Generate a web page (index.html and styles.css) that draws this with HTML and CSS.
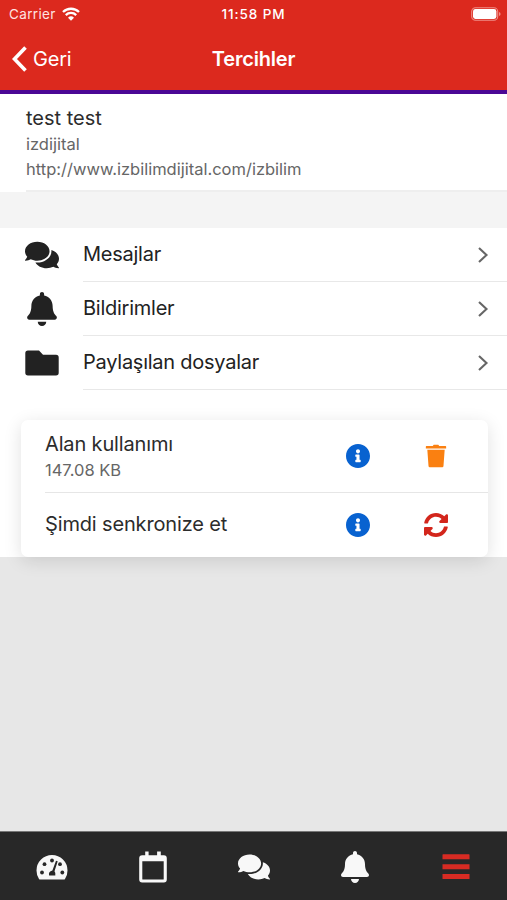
FILE: index.html
```html
<!doctype html>
<html lang="tr">
<head>
    <meta charset="UTF-8">
    <meta name="viewport" content="width=device-width, initial-scale=1.0">
    <title>Tercihler</title>

    <link rel="stylesheet" href="styles.css">
</head>
<body>
    <!-- Shared icons -->
    <svg class="sprite" aria-hidden="true">
        <symbol id="comments" viewBox="0 0 576 512">
            <path d="M416 192c0-88.4-93.1-160-208-160S0 103.6 0 192c0 34.3 14.1 65.9 38 92-13.4 30.2-35.5 54.2-35.8 54.5-2.2 2.3-2.8 5.7-1.5 8.7S4.8 352 8 352c36.6 0 66.9-12.3 88.7-25 32.2 15.7 70.3 25 111.3 25 114.9 0 208-71.6 208-160zm122 220c23.9-26 38-57.7 38-92 0-66.9-53.5-124.2-129.3-148.1.9 6.6 1.3 13.3 1.3 20.1 0 105.9-107.7 192-240 192-10.8 0-21.3-.8-31.7-1.9C207.8 439.6 281.8 480 368 480c41 0 79.1-9.2 111.3-25 21.8 12.7 52.1 25 88.7 25 3.2 0 6.1-1.9 7.3-4.8 1.3-2.9.7-6.3-1.5-8.7-.3-.3-22.4-24.2-35.8-54.5z"/>
        </symbol>
        <symbol id="bell" viewBox="0 0 448 512">
            <path d="M224 512c35.32 0 63.97-28.65 63.97-64H160.03c0 35.35 28.65 64 63.97 64zm215.39-149.71c-19.32-20.76-55.47-51.99-55.47-154.29 0-77.7-54.48-139.9-127.94-155.16V32c0-17.67-14.32-32-31.98-32s-31.98 14.33-31.98 32v20.84C118.56 68.1 64.08 130.3 64.08 208c0 102.3-36.15 133.53-55.47 154.29-6 6.45-8.66 14.16-8.61 21.71.11 16.4 12.98 32 32.1 32h383.8c19.12 0 32-15.6 32.1-32 .05-7.55-2.61-15.27-8.61-21.71z"/>
        </symbol>
        <symbol id="info" viewBox="8 8 496 496">
            <path d="M256 8C119.043 8 8 119.083 8 256c0 136.997 111.043 248 248 248s248-111.003 248-248C504 119.083 392.957 8 256 8zm0 110c23.196 0 42 18.804 42 42s-18.804 42-42 42-42-18.804-42-42 18.804-42 42-42zm56 254c0 6.627-5.373 12-12 12h-88c-6.627 0-12-5.373-12-12v-24c0-6.627 5.373-12 12-12h12v-64h-12c-6.627 0-12-5.373-12-12v-24c0-6.627 5.373-12 12-12h64c6.627 0 12 5.373 12 12v100h12c6.627 0 12 5.373 12 12v24z"/>
        </symbol>
        <symbol id="chevron" viewBox="0 0 12 18">
            <path d="M2 2l7.5 7L2 16" fill="none" stroke="currentColor" stroke-width="2.1"/>
        </symbol>
    </svg>

    <header>
        <div class="status">
            <div class="carrier">
                Carrier
                <svg class="wifi" viewBox="0 0 18 14">
                    <path d="M1 5a11.5 11.5 0 0 1 16 0M3.8 8.1a7.4 7.4 0 0 1 10.4 0" fill="none" stroke="#fff" stroke-width="2.3"/>
                    <path d="M9 13.8L6 10.8a4.3 4.3 0 0 1 6 0z" fill="#fff"/>
                </svg>
            </div>
            <div class="time">11:58 PM</div>
            <svg class="battery" viewBox="0 0 30 14">
                <rect x=".7" y=".7" width="26" height="12.6" rx="3.8" fill="none" stroke="#ee8f88" stroke-width="1.1"/>
                <rect x="2" y="2" width="23.4" height="10" rx="2.4" fill="#fff"/>
                <path d="M28 5v4q1.6-.6 1.6-2T28 5z" fill="#ee8f88"/>
            </svg>
        </div>
        <nav>
            <a class="back" href="#">
                <svg viewBox="0 0 16 26"><path d="M14.500 1.500L3.500 13l11 11.500" fill="none" stroke="#fff" stroke-width="3.6"/></svg>
                Geri
            </a>
            <h1>Tercihler</h1>
        </nav>
    </header>

    <main>
        <section class="profile">
            <h2>test test</h2>
            <p>izdijital</p>
            <p>http://www.izbilimdijital.com/izbilim</p>
        </section>

        <ul class="menu">
            <li>
                <svg class="menu-icon"><use href="#comments"/></svg>
                <a href="#">Mesajlar <svg><use href="#chevron"/></svg></a>
            </li>
            <li>
                <svg class="menu-icon"><use href="#bell"/></svg>
                <a href="#">Bildirimler <svg><use href="#chevron"/></svg></a>
            </li>
            <li>
                <svg class="menu-icon" viewBox="0 0 34 34"><path d="M3 4.5h11l4 4.3h13a2.7 2.7 0 0 1 2.7 2.7v15.3a2.7 2.7 0 0 1-2.7 2.7H3a2.7 2.7 0 0 1-2.7-2.7V7.2A2.7 2.7 0 0 1 3 4.5z"/></svg>
                <a href="#">Paylaşılan dosyalar <svg><use href="#chevron"/></svg></a>
            </li>
        </ul>

        <section class="card">
            <div class="card-row usage">
                <div class="card-text">
                    <h3>Alan kullanımı</h3>
                    <p>147.08 KB</p>
                </div>
                <svg class="icon-info"><use href="#info"/></svg>
                <svg class="icon-action icon-trash" viewBox="0 0 24 26">
                    <path d="M1.500 2.200h7L9.500.8h5l1 1.400h7q.5 0 .5.500v2.300H1V2.700q0-.5.500-.5zM2.600 6.300h18.800l-1.300 17.500q-.1 1.300-1.300 1.300H5.200q-1.200 0-1.300-1.300z"/>
                </svg>
            </div>
            <div class="card-row sync">
                <div class="card-text">
                    <h3>Şimdi senkronize et</h3>
                </div>
                <svg class="icon-info"><use href="#info"/></svg>
                <svg class="icon-action icon-sync" viewBox="8 8 496 496">
                    <path d="M370.72 133.28C339.458 104.008 298.888 87.962 255.848 88c-77.458.068-144.328 53.178-162.791 126.85-1.344 5.363-6.122 9.15-11.651 9.15H24.103c-7.498 0-13.194-6.807-11.807-14.176C33.933 94.924 134.813 8 256 8c66.448 0 126.791 26.136 171.315 68.685L463.03 40.97C478.149 25.851 504 36.559 504 57.941V192c0 13.255-10.745 24-24 24H345.941c-21.382 0-32.09-25.851-16.971-40.971l41.75-41.749zM32 296h134.059c21.382 0 32.09 25.851 16.971 40.971l-41.75 41.75c31.262 29.273 71.835 45.319 114.876 45.28 77.418-.07 144.315-53.144 162.787-126.849 1.344-5.363 6.122-9.15 11.651-9.15h57.304c7.498 0 13.194 6.807 11.807 14.176C478.067 417.076 377.187 504 256 504c-66.448 0-126.791-26.136-171.315-68.685L48.97 471.03C33.851 486.149 8 475.441 8 454.059V320c0-13.255 10.745-24 24-24z"/>
                </svg>
            </div>
        </section>
    </main>

    <footer>
        <a href="#">
            <svg viewBox="0 0 32 32">
                <path d="M3 28Q.5 24.500.5 19.500a15.500 15.500 0 0 1 31 0q0 5-2.500 8.500-.4.500-1.200.500H4.200q-.8 0-1.200-.5z"/>
                <g fill="#282828">
                    <circle cx="6" cy="21.500" r="1.900"/>
                    <circle cx="8.500" cy="13.200" r="1.900"/>
                    <circle cx="16" cy="9.500" r="1.900"/>
                    <circle cx="24" cy="13.200" r="1.900"/>
                    <circle cx="26.300" cy="21.500" r="1.900"/>
                    <path d="M20 9.800l1.700.5-3.200 10q1.600 2.200.8 4.200h-6.200q-1-3.800 3.300-4.900z"/>
                </g>
            </svg>
        </a>
        <a href="#">
            <svg viewBox="0 0 32 32">
                <path fill-rule="evenodd" d="M8.200.5h3.400v3.700h8.500V.5h3.700v3.700h3a3 3 0 0 1 3 3v21.300a3 3 0 0 1-3 3H5.200a3 3 0 0 1-3-3V7.200a3 3 0 0 1 3-3h3zM5.300 10.300v17.700q0 .5.500.5h20.400q.5 0 .5-.5V10.300z"/>
            </svg>
        </a>
        <a href="#"><svg><use href="#comments"/></svg></a>
        <a href="#"><svg><use href="#bell"/></svg></a>
        <a class="active" href="#">
            <svg viewBox="0 0 32 32"><path d="M3 3.300h26q.5 0 .5.500v4.500H2.500V3.800q0-.5.500-.5zM2.500 13.200h27v5h-27zM2.500 23h27v4.500q0 .5-.5.500H3q-.5 0-.5-.5z"/></svg>
        </a>
    </footer>
</body>
</html>
```

FILE: styles.css
```css
* {
    box-sizing: border-box;
}

body {
    font-family: 'Inter', sans-serif;
    margin: 0;
    height: 900px;
    display: flex;
    flex-direction: column;
    overflow: hidden;
    background-color: #e7e7e7;
    color: #2c2c2c;
}

h1, h2, h3, p, ul {
    margin: 0;
    padding: 0;
    font-weight: 400;
}

a {
    color: inherit;
    text-decoration: none;
}

svg {
    display: block;
    flex-shrink: 0;
    fill: currentColor;
}

.sprite {
    display: none;
}

header {
    height: 94px;
    background-color: #dc291e;
    border-bottom: 4px solid #4b0795;
    color: #fff;
}

.status, nav {
    display: grid;
    grid-template-columns: 1fr auto 1fr;
    align-items: center;
}

.status {
    height: 27px;
    padding: 0 6px 0 9px;
    font-size: 13.5px;
}

.carrier {
    display: flex;
    align-items: center;
    gap: 6px;
    letter-spacing: 0.35px;
    color: #ffe3e0;
}

.wifi {
    width: 18px;
    height: 14px;
}

.time {
    margin-right: 3px;
    font-weight: 500;
    font-size: 13.5px;
    letter-spacing: 0.9px;
}

.battery {
    width: 30px;
    height: 14px;
    justify-self: end;
}

nav {
    height: 64px;
    padding: 0 11px;
}

.back {
    display: flex;
    align-items: center;
    gap: 6px;
    font-size: 20px;
    letter-spacing: -0.2px;
}

.back svg {
    width: 16px;
    height: 26px;
}

h1 {
    font-size: 20px;
    font-weight: 600;
    letter-spacing: -0.2px;
}

main {
    background-color: #fff;
}

.profile {
    height: 134px;
    padding: 11px 0 0 26px;
    border-bottom: 36px solid #f4f4f4;
    background: linear-gradient(#eee, #eee) 26px 96px / 100% 2px no-repeat #fff;
}

h2, h3, .menu a {
    font-size: 20px;
    line-height: 27px;
    letter-spacing: -0.25px;
}

h2 {
    letter-spacing: 0;
}

p {
    font-size: 16.5px;
    line-height: 24.5px;
    color: #666;
}

.menu {
    list-style: none;
}

.menu li {
    display: flex;
    align-items: center;
    height: 54px;
    padding-left: 25px;
    color: #222;
}

.menu-icon {
    width: 34px;
    height: 34px;
    margin-right: 24px;
}

.menu a {
    flex: 1;
    display: flex;
    align-items: center;
    justify-content: space-between;
    height: 54px;
    padding-right: 18px;
    border-bottom: 1px solid #e8e8e8;
}

.menu a svg {
    width: 12px;
    height: 18px;
    margin-top: 1px;
    color: #666;
}

.card {
    margin: 30px 19px 0 21px;
    height: 137px;
    border-radius: 7px;
    background-color: #fff;
    box-shadow: 0 4px 18px rgba(0, 0, 0, 0.12);
}

.card-row {
    display: flex;
    align-items: center;
    margin-left: 24px;
    padding-right: 40px;
}

.usage {
    height: 73px;
    border-bottom: 1px solid #e6e6e6;
}

.usage .card-text {
    padding-top: 1px;
}

.sync {
    height: 63px;
}

.card-text {
    flex: 1;
}

.card-text h3 {
    letter-spacing: -0.15px;
}

.icon-info {
    width: 24px;
    height: 24px;
    margin-right: 54px;
    color: #0862d0;
}

.icon-action {
    width: 24px;
    height: 24px;
}

.icon-trash {
    color: #fa8011;
}

.icon-sync {
    color: #d3261c;
}

footer {
    display: flex;
    height: 69px;
    margin-top: auto;
    padding-left: 1px;
    border-top: 1px solid #777;
    background-color: #282828;
    color: #f8f8f8;
}

footer a {
    flex: 1;
    display: flex;
    justify-content: center;
    padding-top: 19px;
}

footer svg {
    width: 32px;
    height: 32px;
}

footer .active {
    color: #d72b23;
}
```
